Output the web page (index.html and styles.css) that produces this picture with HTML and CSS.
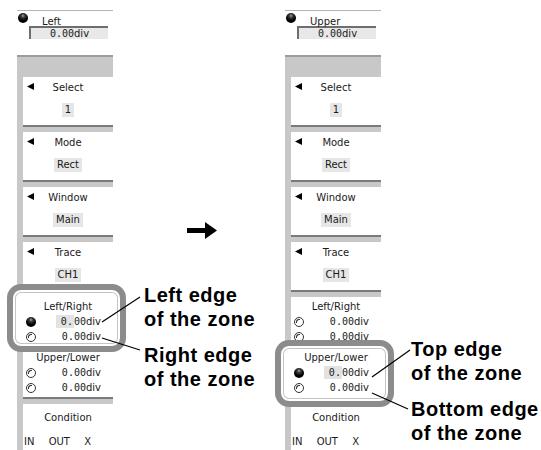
FILE: index.html
```html
<!DOCTYPE html>
<html>
<head>
<meta charset="utf-8">
<link rel="stylesheet" href="styles.css">
</head>
<body>
<div class="figure">
  <div class="panel">
    <div class="head">
      <div class="head-row"><span class="knob on"></span><span class="head-label">Left</span></div>
      <div class="valbox"><span class="num">0.00</span>div</div>
    </div>
    <div class="band"></div>
    <div class="body">
      <div class="strip"></div>
      <div class="content">
        <div class="section"><span class="tri"></span><div class="label">Select</div><div class="value"><span class="box">1</span></div></div>
        <div class="section"><span class="tri"></span><div class="label">Mode</div><div class="value"><span class="box">Rect</span></div></div>
        <div class="section"><span class="tri"></span><div class="label">Window</div><div class="value"><span class="box">Main</span></div></div>
        <div class="section"><span class="tri"></span><div class="label">Trace</div><div class="value"><span class="box">CH1</span></div></div>
        <div class="group">
          <div class="sub hl hl-a">
            <div class="subtitle">Left/Right</div>
            <div class="row"><span class="knob on"></span><span class="val"><span class="cur"><span class="num">0.</span></span><span class="num">00</span>div</span></div>
            <div class="row"><span class="knob off"></span><span class="val"><span class="num">0.00</span>div</span></div>
          </div>
          <div class="sub last">
            <div class="subtitle">Upper/Lower</div>
            <div class="row"><span class="knob off"></span><span class="val"><span class="num">0.00</span>div</span></div>
            <div class="row"><span class="knob off"></span><span class="val"><span class="num">0.00</span>div</span></div>
          </div>
        </div>
        <div class="condition">
          <div class="subtitle">Condition</div>
          <div class="opts"><span>IN</span><span>OUT</span><span>X</span></div>
        </div>
      </div>
    </div>
  </div>

  <div class="mid">
    <svg class="arrow" viewBox="0 0 30 17" width="30" height="17"><rect x="0" y="6" width="20" height="5" fill="#000"/><polygon points="18,0 30,8.5 18,17" fill="#000"/></svg>
    <div class="notes">
      <div class="callout">Left edge<br>of the zone</div>
      <div class="callout">Right edge<br>of the zone</div>
    </div>
  </div>

  <div class="panel">
    <div class="head">
      <div class="head-row"><span class="knob on"></span><span class="head-label">Upper</span></div>
      <div class="valbox"><span class="num">0.00</span>div</div>
    </div>
    <div class="band"></div>
    <div class="body">
      <div class="strip"></div>
      <div class="content">
        <div class="section"><span class="tri"></span><div class="label">Select</div><div class="value"><span class="box">1</span></div></div>
        <div class="section"><span class="tri"></span><div class="label">Mode</div><div class="value"><span class="box">Rect</span></div></div>
        <div class="section"><span class="tri"></span><div class="label">Window</div><div class="value"><span class="box">Main</span></div></div>
        <div class="section"><span class="tri"></span><div class="label">Trace</div><div class="value"><span class="box">CH1</span></div></div>
        <div class="group">
          <div class="sub">
            <div class="subtitle">Left/Right</div>
            <div class="row"><span class="knob off"></span><span class="val"><span class="num">0.00</span>div</span></div>
            <div class="row"><span class="knob off"></span><span class="val"><span class="num">0.00</span>div</span></div>
          </div>
          <div class="sub last hl hl-b">
            <div class="subtitle">Upper/Lower</div>
            <div class="row"><span class="knob on"></span><span class="val"><span class="cur"><span class="num">0.</span></span><span class="num">00</span>div</span></div>
            <div class="row"><span class="knob off"></span><span class="val"><span class="num">0.00</span>div</span></div>
          </div>
        </div>
        <div class="condition">
          <div class="subtitle">Condition</div>
          <div class="opts"><span>IN</span><span>OUT</span><span>X</span></div>
        </div>
      </div>
    </div>
  </div>

  <div class="notes-right">
    <div class="callout">Top edge<br>of the zone</div>
    <div class="callout">Bottom edge<br>of the zone</div>
  </div>
</div>

<svg class="leaders" width="541" height="450" viewBox="0 0 541 450">
  <g stroke="#000" stroke-width="1.2" fill="none">
    <line x1="102" y1="322" x2="140" y2="297"/>
    <line x1="102" y1="338" x2="140" y2="350"/>
    <line x1="372" y1="377" x2="410" y2="350"/>
    <line x1="372" y1="393" x2="408" y2="409"/>
  </g>
</svg>
</body>
</html>
```

FILE: styles.css
```css
html, body {
  margin: 0;
  padding: 0;
}
body {
  position: relative;
  width: 541px;
  height: 450px;
  overflow: hidden;
  background: #fff;
  font-family: "DejaVu Sans", "Noto Sans", sans-serif;
  font-size: 10px;
  color: #1a1a1a;
}
.figure {
  display: flex;
  padding: 10px 0 0 17px;
  height: 440px;
}
.panel {
  width: 96px;
  flex-shrink: 0;
  display: flex;
  flex-direction: column;
}
.head {
  height: 45px;
  box-sizing: border-box;
  border-top: 1px solid #b4b4b4;
}
.head-row {
  display: flex;
  align-items: flex-start;
  height: 13px;
  padding: 2px 0 0 1px;
}
.head-label {
  margin-left: 14px;
  margin-top: 3px;
  line-height: 12px;
}
.valbox {
  margin-left: 12px;
  width: 79px;
  height: 13px;
  box-sizing: border-box;
  background: #e8e8e8;
  border-top: 2px solid #6e6e6e;
  border-left: 2px solid #6e6e6e;
  text-align: center;
  line-height: 11px;
}
.num {
  font-family: "DejaVu Sans Mono", monospace;
  font-size: 10px;
}
.band {
  height: 22px;
  box-sizing: border-box;
  background: #c8c8c8;
  border-top: 2px solid #9c9c9c;
}
.body {
  flex: 1;
  display: flex;
}
.strip {
  width: 6px;
  background: #c8c8c8;
}
.content {
  flex: 1;
  display: flex;
  flex-direction: column;
  background: #c8c8c8;
}
.section {
  position: relative;
  height: 50px;
  box-sizing: border-box;
  background: #fff;
  border-bottom: 2px solid #7a7a7a;
  margin-bottom: 5px;
  padding-top: 4px;
}
.tri {
  position: absolute;
  left: 4px;
  top: 6px;
  width: 7px;
  height: 7px;
  background: #000;
  clip-path: polygon(0 50%, 100% 0, 100% 100%);
}
.label {
  text-align: center;
  line-height: 14px;
}
.value {
  text-align: center;
  margin-top: 8px;
  line-height: 14px;
}
.box {
  display: inline-block;
  background: #e6e6e6;
  padding: 0 3px;
  line-height: 14px;
}
.group {
  background: #fff;
  padding: 2px 0;
  border-bottom: 2px solid #7a7a7a;
  margin-bottom: 5px;
}
.sub {
  padding-bottom: 6px;
}
.sub.last {
  padding-bottom: 0;
}
.subtitle {
  text-align: center;
  line-height: 15px;
}
.row {
  display: flex;
  align-items: center;
  height: 15px;
  padding-left: 3px;
}
.val {
  margin-left: auto;
  margin-right: 12px;
  line-height: 13px;
}
.cur {
  background: #e2e2e2;
  padding: 1px 1px 1px 5px;
  margin-left: -5px;
}
.knob {
  width: 10px;
  height: 10px;
  border-radius: 50%;
  flex-shrink: 0;
  box-sizing: border-box;
}
.knob.on {
  background: radial-gradient(circle at 50% 28%, #a0a0a0 0, #3a3a3a 22%, #000 55%);
}
.knob.off {
  position: relative;
  background: #fff;
  border: 1px solid #333;
}
.knob.off::after {
  content: "";
  position: absolute;
  left: 1px;
  top: 1px;
  width: 3px;
  height: 3px;
  border-top: 1px solid #333;
  border-left: 1px solid #333;
  border-radius: 3px 0 0 0;
}
.sub.hl {
  position: relative;
  background: #fff;
  border: 6px solid #8c8c8c;
  border-radius: 14px;
  box-shadow: inset 0 0 0 2px #fff, inset 0 0 0 3px #c4c4c4;
}
.sub.hl-a {
  margin: -15px -13px -2px -16px;
  padding: 9px 7px 2px 10px;
}
.sub.hl-b {
  margin: -10px -13px -12px -16px;
  padding: 4px 7px 6px 10px;
}
.condition {
  flex: 1;
  background: #fff;
  padding-top: 6px;
}
.opts {
  display: flex;
  justify-content: space-between;
  padding: 0 22px 0 1px;
  margin-top: 10px;
  line-height: 14px;
}
.mid {
  width: 172px;
  flex-shrink: 0;
  display: flex;
  flex-direction: column;
}
.arrow {
  display: block;
  margin: 212px 0 0 74px;
}
.notes {
  margin: 44px 0 0 31px;
}
.notes-right {
  margin: 327px 0 0 30px;
}
.callout {
  font-family: "Liberation Sans", Arial, sans-serif;
  font-weight: bold;
  font-size: 20px;
  line-height: 24px;
  letter-spacing: 0.5px;
  color: #000;
  white-space: nowrap;
}
.callout + .callout {
  margin-top: 12px;
}
.leaders {
  position: absolute;
  left: 0;
  top: 0;
  pointer-events: none;
}
```
